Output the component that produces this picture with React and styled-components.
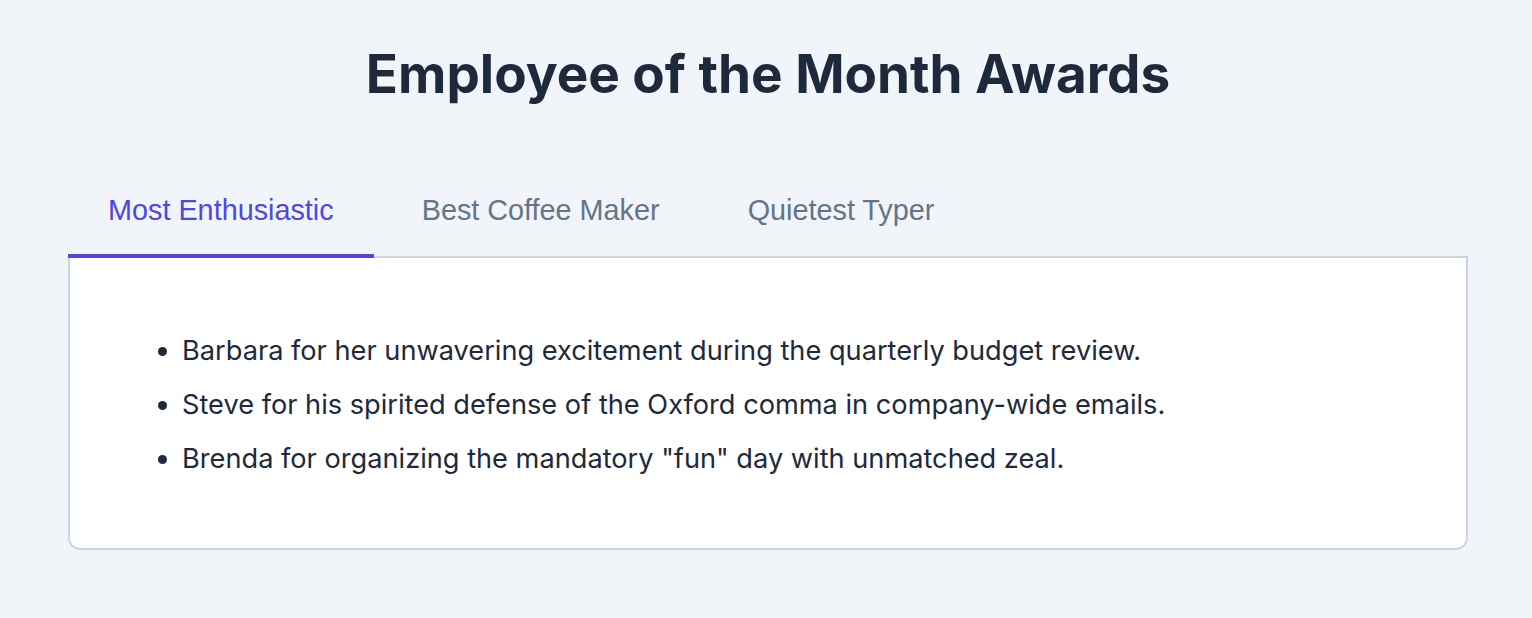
import { useState } from "react";
import styled, { createGlobalStyle } from "styled-components";

const GlobalStyle = createGlobalStyle`
	body {
		margin: 0;
		background: #f1f5f9;
		font-family: Inter, "Liberation Sans", sans-serif;
		color: #1e293b;
	}
`;

const Page = styled.div`
	min-height: 100vh;
	padding: 0 64px 0 68px;
	box-sizing: border-box;
`;

const Title = styled.h1`
	margin: 0;
	padding: 38px 0 0;
	text-align: center;
	font-size: 53px;
	line-height: 72px;
	font-weight: 700;
	color: #1e293b;
`;

const TabList = styled.div`
	display: flex;
	gap: 8px;
	margin-top: 70px;
`;

const Tab = styled.button`
	background: none;
	border: none;
	border-bottom: 4px solid ${(p) => (p.$active ? "#4f46e5" : "transparent")};
	padding: 12px 40px 26px;
	margin-bottom: -2px;
	position: relative;
	font-family: "Liberation Sans", Arial, sans-serif;
	font-size: 28.8px;
	line-height: 36px;
	color: ${(p) => (p.$active ? "#4f46e5" : "#64748b")};
	cursor: pointer;
`;

const Panel = styled.div`
	background: #fff;
	border: 2px solid #cbd5e1;
	border-radius: 0 0 12px 12px;
	padding: 48px 64px;
`;

const List = styled.ul`
	margin: 25px 0 21px;
	padding-left: 48px;
`;

const Item = styled.li`
	font-size: 27.2px;
	line-height: 40px;
	margin-bottom: 14px;
	&:last-child {
		margin-bottom: 0;
	}
`;

const awards = {
	"Most Enthusiastic": [
		"Barbara for her unwavering excitement during the quarterly budget review.",
		"Steve for his spirited defense of the Oxford comma in company-wide emails.",
		'Brenda for organizing the mandatory "fun" day with unmatched zeal.',
	],
	"Best Coffee Maker": [
		"Gary for discovering that the machine has a descale button.",
		"Linda for always leaving exactly one sip in the pot.",
	],
	"Quietest Typer": [
		"Tom, whose keyboard has never been heard.",
		"Priya for her mechanical switches with dampeners.",
	],
};

function App() {
	const [tab, setTab] = useState("Most Enthusiastic");

	return (
		<Page>
			<GlobalStyle />
			<Title>Employee of the Month Awards</Title>
			<TabList>
				{Object.keys(awards).map((name) => (
					<Tab key={name} $active={name === tab} onClick={() => setTab(name)}>
						{name}
					</Tab>
				))}
			</TabList>
			<Panel>
				<List>
					{awards[tab].map((x) => (
						<Item key={x}>{x}</Item>
					))}
				</List>
			</Panel>
		</Page>
	);
}

export default App;
